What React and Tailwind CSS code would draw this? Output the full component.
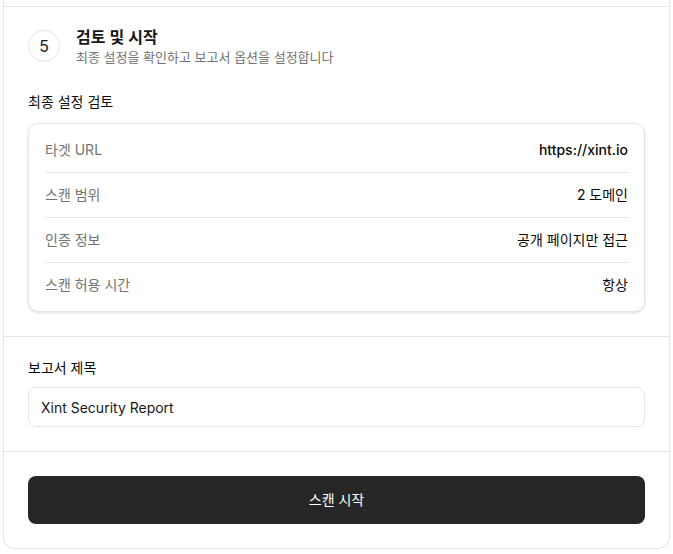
import React from "react";

const rows = [
  ["타겟 URL", "https://xint.io", "font-medium"],
  ["스캔 범위", "2 도메인", "font-normal"],
  ["인증 정보", "공개 페이지만 접근", "font-normal"],
  ["스캔 허용 시간", "항상", "font-normal"],
];

export default function App() {
  return (
    <div
      className="min-h-screen bg-white px-[3px] text-[#171717]"
      style={{ fontFamily: 'Inter, "Noto Sans CJK KR", sans-serif' }}
    >
      <div className="rounded-b-xl border-x border-b border-[#e5e5e5] bg-white">
        <div className="h-[6px]" />
        <section className="border-t border-[#e5e5e5] px-6 pt-[19px] pb-6">
          <div className="flex h-10 items-center gap-4">
            <div className="flex h-8 w-8 shrink-0 items-center justify-center rounded-full border border-[#e5e5e5] text-base text-[#171717]">
              5
            </div>
            <div className="flex flex-col">
              <div className="text-base font-semibold leading-[22px] text-[#171717]">
                검토 및 시작
              </div>
              <div className="text-[13px] leading-[18px] text-[#737373]">
                최종 설정을 확인하고 보고서 옵션을 설정합니다
              </div>
            </div>
          </div>
          <div className="mt-[26px] text-sm font-normal leading-5 text-[#0a0a0a]">
            최종 설정 검토
          </div>
          <div className="mt-[11px] rounded-[10px] border border-[#e5e5e5] bg-white px-4 py-1 shadow-sm">
            {rows.map(([k, v, w], i) => (
              <div
                key={k}
                className={
                  "flex items-center justify-between py-3 text-sm leading-5 " +
                  (i < rows.length - 1 ? "border-b border-[#e5e5e5]" : "")
                }
              >
                <span className="text-[#737373]">{k}</span>
                <span className={w + " text-[#0a0a0a]"}>{v}</span>
              </div>
            ))}
          </div>
        </section>
        <section className="border-t border-[#e5e5e5] px-6 pt-[21px] pb-6">
          <div className="text-sm font-normal leading-5 text-[#0a0a0a]">보고서 제목</div>
          <input
            readOnly
            defaultValue="Xint Security Report"
            className="mt-[9px] block h-10 w-full rounded-lg border border-[#e5e5e5] bg-white px-3 text-sm text-[#171717] outline-none"
            style={{ fontFamily: 'Inter, "Noto Sans CJK KR", sans-serif' }}
          />
        </section>
        <section className="border-t border-[#e5e5e5] px-6 py-6">
          <button className="flex h-12 w-full items-center justify-center rounded-lg bg-[#262626] text-sm font-normal text-white">
            스캔 시작
          </button>
        </section>
      </div>
    </div>
  );
}
